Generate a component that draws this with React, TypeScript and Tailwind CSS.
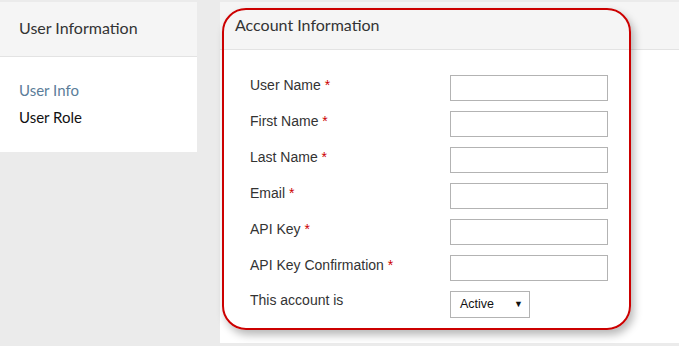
import React from 'react';

const fields = [
  'User Name',
  'First Name',
  'Last Name',
  'Email',
  'API Key',
  'API Key Confirmation',
];

export default function App() {
  return (
    <div className="relative flex h-[346px] w-[679px] gap-[23px] overflow-hidden bg-[#ebebeb] pt-[2px] font-['Liberation_Sans',Arial,sans-serif]">
      {/* sidebar */}
      <div className="w-[197px] self-start bg-white">
        <div className="flex h-[55px] items-center border-b border-[#e3e3e3] bg-[#f5f5f5] pb-[3px] pl-[19px] font-['Lato',sans-serif] text-[16px] text-[#333]">
          User Information
        </div>
        <div className="flex flex-col gap-[9px] pb-[26px] pl-[19px] pt-[24px] font-['Lato',sans-serif] text-[15px] leading-[18px]">
          <span className="text-[#5b7d99]">User Info</span>
          <span className="text-[#111]">User Role</span>
        </div>
      </div>

      {/* main panel */}
      <div className="h-[341px] flex-1 bg-white">
        <div className="flex h-[48px] items-center border-b border-[#e3e3e3] bg-[#f5f5f5] pb-[1px] pl-[15px] font-['Lato',sans-serif] text-[16px] text-[#333]">
          Account Information
        </div>
        <div className="flex flex-col gap-[10px] pl-[30px] pt-[25px]">
          {fields.map((f) => (
            <div key={f} className="flex h-[26px] items-center">
              <label className="w-[200px] -translate-y-[3px] text-[14px] text-[#333]">
                {f} <span className="text-[#cc0000]">*</span>
              </label>
              <div className="h-[26px] w-[158px] border border-[#b3b3b3] bg-white" />
            </div>
          ))}
          <div className="flex h-[27px] items-center">
            <label className="w-[200px] -translate-y-[4px] text-[14px] text-[#333]">This account is</label>
            <div className="flex h-[27px] w-[80px] items-center justify-between border border-[#b3b3b3] bg-white pl-[9px] pr-[6px] text-[12.5px] text-[#111]">
              <span>Active</span>
              <span className="text-[9px]">▼</span>
            </div>
          </div>
        </div>
      </div>

      {/* red annotation outline */}
      <div className="pointer-events-none absolute left-[222px] top-[8px] h-[322px] w-[409px] rounded-[24px] border-2 border-[#cc0000] shadow-[3px_5px_8px_rgba(0,0,0,0.28)]" />
    </div>
  );
}
